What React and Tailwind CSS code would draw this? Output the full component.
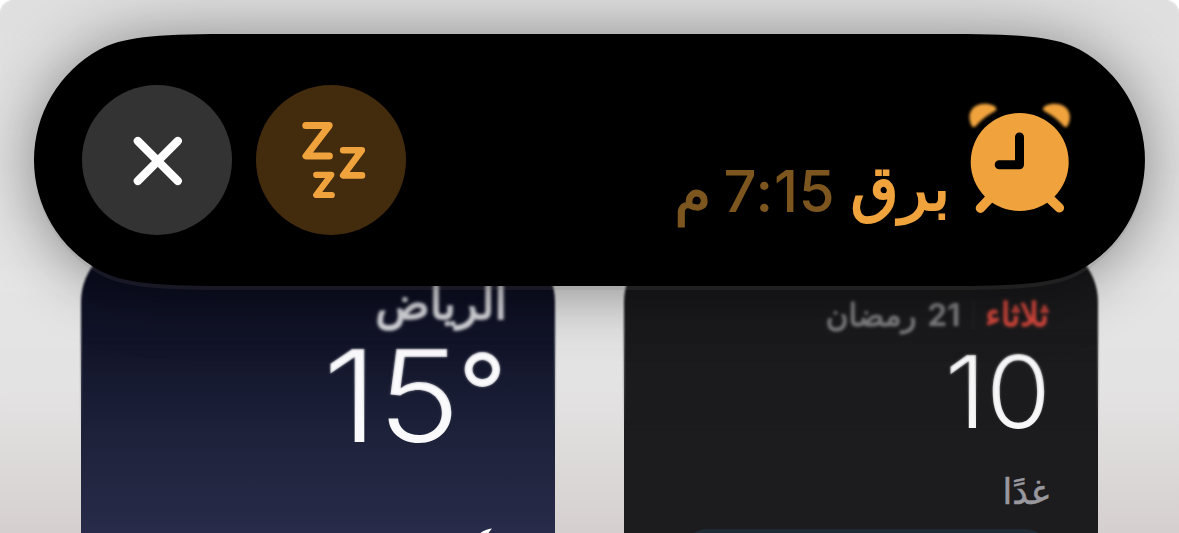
const arabic = "font-['Inter','DejaVu_Sans',sans-serif]";

function AlarmIcon() {
  const bell = "M972.2 126.4 C967 118 969 107.2 980 104.2 C987.5 102.4 996 105.2 996.4 109 C996.6 110.4 995 111.2 993 112.2 C986 115.8 980.4 120.8 976.4 125.4 C974.8 127.2 973.2 127.6 972.2 126.4Z";
  return (
    <svg width="108" height="124" viewBox="966 98 108 124" fill="#f0a33c" className="shrink-0">
      <g className="blur-[1.4px]">
        <path d={bell} />
        <path d={bell} transform="translate(2039.4 0) scale(-1 1)" />
      </g>
      <circle cx="1019.7" cy="162" r="49" />
      <path d="M992 196L980.4 208.2M1047 196L1059.4 207.8" stroke="#f0a33c" strokeWidth="9.4" strokeLinecap="round" />
      <path d="M1019.5 137V164.8H999.2" fill="none" stroke="#000" strokeWidth="9" strokeLinecap="round" strokeLinejoin="round" />
    </svg>
  );
}

function SnoozeButton() {
  return (
    <button aria-label="غفوة" className="h-[150px] w-[150px] shrink-0 rounded-full bg-[#432b0e]">
      <svg width="150" height="150" viewBox="256 85 150 150" fill="none" stroke="#f0a33c" strokeLinecap="round" strokeLinejoin="round">
        <path strokeWidth="7" d="M305.8 125.6H329.2L306 156H329.4" />
        <path strokeWidth="6.6" d="M343.2 150.3H361.8L343.2 175.4H362" />
        <path strokeWidth="6.2" d="M316.2 174.8H331.3L316.2 195H331.8" />
      </svg>
    </button>
  );
}

function CloseButton() {
  return (
    <button aria-label="إيقاف" className="h-[150px] w-[150px] shrink-0 rounded-full bg-[#333333]">
      <svg width="150" height="150" viewBox="82 85 150 150" fill="none" stroke="#fff" strokeWidth="8.2" strokeLinecap="round">
        <path d="M137.8 141L177.8 181M177.8 141L137.8 181" />
      </svg>
    </button>
  );
}

function AlarmIsland() {
  return (
    <section className="relative z-20 mx-auto h-[252px] w-[1111px] shrink-0 [filter:drop-shadow(0_4px_0_rgba(120,110,110,0.14))_drop-shadow(0_4px_32px_rgba(0,0,0,0.42))]">
      <div className="flex h-[252px] items-center bg-black pr-[71px] pl-[48px] [clip-path:path('M0_126A126_126_0_0_1_65.5_15.5C87_3.7_120_0_190_0H921C991_0_1024_3.7_1045.5_15.5A126_126_0_0_1_1045.5_236.5C1024_248.3_991_252_921_252H190C120_252_87_248.3_65.5_236.5A126_126_0_0_1_0_126Z')]">
        <AlarmIcon />
        <div className="mr-[16px] flex h-[252px] items-start pt-[117px] leading-[80px]">
          <span className="-mt-[3px] text-[62px] text-[#f0a33c] [-webkit-text-stroke:2px_#f0a33c]">برق</span>
          <span className="mr-[15px] text-[58px] font-medium tracking-[0.8px] text-[#7d561f]">7:15</span>
          <span className="mr-[12px] text-[60px] text-[#7d561f] [-webkit-text-stroke:1.2px_#7d561f]">م</span>
        </div>
        <div className="mr-auto flex gap-[24px]">
          <SnoozeButton />
          <CloseButton />
        </div>
      </div>
    </section>
  );
}

function CalendarWidget() {
  return (
    <section className="flex h-[360px] w-[474px] flex-col rounded-[62px] bg-[linear-gradient(#161618,#1c1c1e_130px)] pt-[53px] pr-[49px]">
      <div className="flex h-[44px] items-center blur-[0.8px]">
        <span className="text-[33px] text-[#d5483d] [-webkit-text-stroke:1.3px_#d5483d]">ثلاثاء</span>
        <span className="mr-[11px] h-[30px] w-px bg-[#2c2c2e]" />
        <span className="mr-[13px] text-[31px] font-bold text-[#808084]">21</span>
        <span className="mr-[11px] text-[31px] text-[#808084] [-webkit-text-stroke:1.2px_#808084]">رمضان</span>
      </div>
      <div className="-mr-[2px] mt-px h-[110px] origin-right scale-x-[1.04] text-[101px] leading-[107px] font-light text-[#f7f7f8] blur-[0.4px]">10</div>
      <div className="mt-[15px] h-[56px] text-[35px] leading-[56px] text-[#98989e] [-webkit-text-stroke:0.6px_#98989e]">غدًا</div>
      <div className="mt-[10px] ml-[56px] h-[70px] w-[366px] shrink-0 self-start rounded-[24px] bg-[#1f2b35]" />
    </section>
  );
}

function WeatherWidget() {
  return (
    <section className="flex h-[360px] w-[474px] flex-col rounded-[62px] bg-[linear-gradient(#0b0d20_40px,#121529_100px,#1c2038_180px,#282b49_293px)] pt-[35px] pr-[48px]">
      <div className="h-[58px] text-[45px] leading-[56px] text-[#dadbe0] blur-[0.8px] [-webkit-text-stroke:1.6px_#dadbe0]">الرياض</div>
      <div dir="ltr" className="flex h-[126px] justify-end text-[128px] leading-[126px] font-light text-[#fafafc] blur-[0.4px]">
        <span className="origin-right scale-x-[1.09]">15</span>
        <span className="-ml-[3px] pt-[5px] text-[108px] leading-[108px] font-normal">°</span>
      </div>
      <svg width="40" height="40" viewBox="0 0 40 40" className="mt-[69px] mr-[13px]" fill="#fff">
        <path d="M38 0.5C26 2 16 12 16 24C16 34 24 40 32 40C26 26 29 10 38 0.5Z" />
      </svg>
    </section>
  );
}

export default function App() {
  return (
    <div className="h-[533px] w-[1179px] bg-white">
      <main dir="rtl" className={`${arabic} relative flex h-[533px] flex-col overflow-hidden rounded-t-[13px] bg-[linear-gradient(#dfdfdf,#e5e5e5_280px,#e4e3e3_390px,#d5d0cf_533px)] pt-[34px]`}>
        <AlarmIsland />
        <div className="-mt-[46px] flex shrink-0 justify-center gap-[69px]">
          <CalendarWidget />
          <WeatherWidget />
        </div>
        <div className="pointer-events-none absolute inset-x-0 top-0 z-10 h-[430px] backdrop-blur-[1.3px] [mask-image:linear-gradient(#000_330px,transparent_430px)]" />
      </main>
    </div>
  );
}
